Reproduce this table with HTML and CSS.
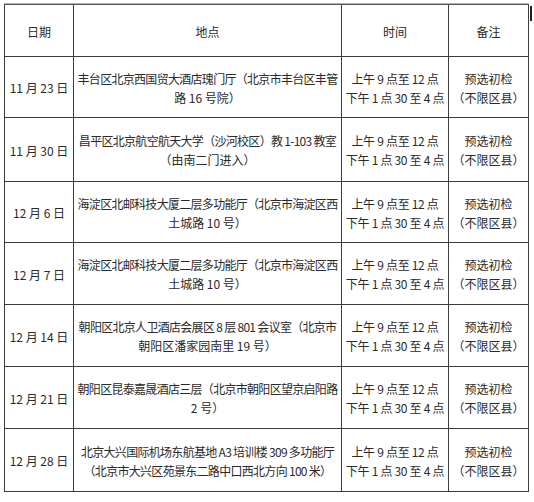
FILE: index.html
```html
<!DOCTYPE html>
<html lang="zh-CN">
<head>
<meta charset="utf-8">
<title>预选初检安排</title>
<link rel="stylesheet" href="styles.css">
</head>
<body>
<div class="sheet">
  <div class="cell head"><span class="ln">日期</span></div>
  <div class="cell head"><span class="ln">地点</span></div>
  <div class="cell head"><span class="ln">时间</span></div>
  <div class="cell head"><span class="ln">备注</span></div>

  <div class="cell"><span class="ln">11 月 23 日</span></div>
  <div class="cell addr"><span class="ln wide">丰台区北京西国贸大酒店瑰门厅（北京市丰台区丰管</span><span class="ln">路 16 号院）</span></div>
  <div class="cell time"><span class="ln">上午 9 点至 12 点</span><span class="ln">下午 1 点 30 至 4 点</span></div>
  <div class="cell"><span class="ln">预选初检</span><span class="ln">（不限区县）</span></div>

  <div class="cell"><span class="ln">11 月 30 日</span></div>
  <div class="cell addr"><span class="ln wide">昌平区北京航空航天大学（沙河校区）教 1-103 教室</span><span class="ln">（由南二门进入）</span></div>
  <div class="cell time"><span class="ln">上午 9 点至 12 点</span><span class="ln">下午 1 点 30 至 4 点</span></div>
  <div class="cell"><span class="ln">预选初检</span><span class="ln">（不限区县）</span></div>

  <div class="cell"><span class="ln">12 月 6 日</span></div>
  <div class="cell addr"><span class="ln wide">海淀区北邮科技大厦二层多功能厅（北京市海淀区西</span><span class="ln">土城路 10 号）</span></div>
  <div class="cell time"><span class="ln">上午 9 点至 12 点</span><span class="ln">下午 1 点 30 至 4 点</span></div>
  <div class="cell"><span class="ln">预选初检</span><span class="ln">（不限区县）</span></div>

  <div class="cell"><span class="ln">12 月 7 日</span></div>
  <div class="cell addr"><span class="ln wide">海淀区北邮科技大厦二层多功能厅（北京市海淀区西</span><span class="ln">土城路 10 号）</span></div>
  <div class="cell time"><span class="ln">上午 9 点至 12 点</span><span class="ln">下午 1 点 30 至 4 点</span></div>
  <div class="cell"><span class="ln">预选初检</span><span class="ln">（不限区县）</span></div>

  <div class="cell"><span class="ln">12 月 14 日</span></div>
  <div class="cell addr"><span class="ln wide">朝阳区北京人卫酒店会展区 8 层 801 会议室（北京市</span><span class="ln">朝阳区潘家园南里 19 号）</span></div>
  <div class="cell time"><span class="ln">上午 9 点至 12 点</span><span class="ln">下午 1 点 30 至 4 点</span></div>
  <div class="cell"><span class="ln">预选初检</span><span class="ln">（不限区县）</span></div>

  <div class="cell"><span class="ln">12 月 21 日</span></div>
  <div class="cell addr"><span class="ln wide">朝阳区昆泰嘉晟酒店三层（北京市朝阳区望京启阳路</span><span class="ln">2 号）</span></div>
  <div class="cell time"><span class="ln">上午 9 点至 12 点</span><span class="ln">下午 1 点 30 至 4 点</span></div>
  <div class="cell"><span class="ln">预选初检</span><span class="ln">（不限区县）</span></div>

  <div class="cell"><span class="ln">12 月 28 日</span></div>
  <div class="cell addr"><span class="ln wide">北京大兴国际机场东航基地 A3 培训楼 309 多功能厅</span><span class="ln wide">（北京市大兴区苑景东二路中口西北方向 100 米）</span></div>
  <div class="cell time"><span class="ln">上午 9 点至 12 点</span><span class="ln">下午 1 点 30 至 4 点</span></div>
  <div class="cell"><span class="ln">预选初检</span><span class="ln">（不限区县）</span></div>
</div>
</body>
</html>
```

FILE: styles.css
```css
html, body {
  margin: 0;
  padding: 0;
  background: #ffffff;
}

body {
  font-family: "Noto Sans CJK SC", "Noto Sans", sans-serif;
  font-size: 12px;
  color: #2a2a2a;
}

.sheet {
  position: relative;
  display: grid;
  grid-template-columns: 69px 268px 107px 80px;
  grid-template-rows: 52px 61px 64px 61px 62px 62px 62px 63px;
  width: max-content;
  margin: 4px 0 0 4px;
  border-left: 1px solid #3c3c3c;
  border-top: 1px solid #5a5a5a;
  box-shadow: 0 -1px 0 #b0b0b0;
}

.sheet::after {
  content: "";
  position: absolute;
  top: 1px;
  right: -3px;
  width: 2px;
  height: 15px;
  background: #222;
}

.cell {
  box-sizing: border-box;
  border-right: 1px solid #3c3c3c;
  border-bottom: 1px solid #3c3c3c;
  display: flex;
  flex-direction: column;
  justify-content: center;
  align-items: center;
  overflow: hidden;
  line-height: 19px;
  padding-top: 1px;
}

.ln {
  display: block;
  white-space: nowrap;
}

.addr .wide {
  letter-spacing: -0.7px;
}

.time .ln {
  letter-spacing: -0.3px;
}
```
